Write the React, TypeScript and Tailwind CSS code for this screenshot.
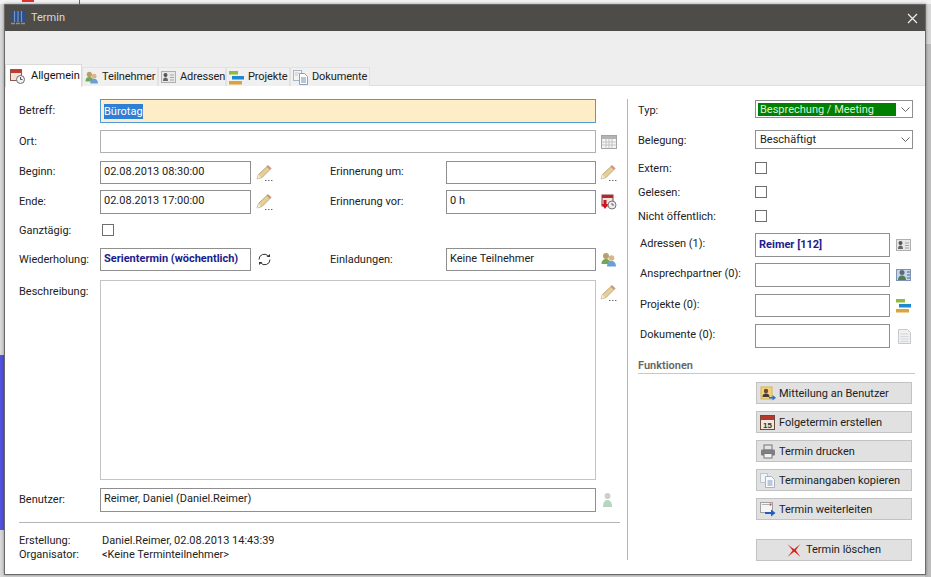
import type { ReactNode } from "react";

function Pencil() {
  return (
    <svg width="17" height="18" viewBox="0 0 17 18" className="shrink-0">
      <path d="M1 15 L2.500 10.500 L12 1.500 L15 4.500 L6 13.500 Z" fill="#e6cf96" stroke="#a89a78" strokeWidth="0.8" />
      <path d="M12 1.500 L15 4.500 L13.800 5.700 L10.700 2.800 Z" fill="#d98a7a" />
      <path d="M1 15 L2.500 10.500 L5 13.800 Z" fill="#f3ead3" />
      <path d="M9 16.500h1.400M12 16.500h1.400M15 16.500h1.400" stroke="#666" strokeWidth="1.100" />
    </svg>
  );
}

function CalendarGrid() {
  return (
    <svg width="16" height="14" viewBox="0 0 16 14" className="shrink-0">
      <rect x="0.500" y="0.500" width="15" height="13" fill="#f4f4f4" stroke="#a4a4a4" />
      <rect x="1" y="1" width="14" height="3" fill="#b4b4b4" />
      <path d="M1 7h14M1 10h14M5 4v9M8 4v9M11 4v9" stroke="#c4c4c4" strokeWidth="1" />
    </svg>
  );
}

function Reminder() {
  return (
    <svg width="16" height="16" viewBox="0 0 16 16" className="shrink-0">
      <rect x="1" y="1" width="11" height="11" fill="#f1e4e4" stroke="#8e3a3a" />
      <rect x="1" y="1" width="11" height="3" fill="#b02a2a" />
      <path d="M2.500 6h3v4h2L4 15 0.500 10h2z" fill="#d4141c" />
      <circle cx="11" cy="11" r="4" fill="#eeeeee" stroke="#777" />
      <path d="M11 9v2h2" stroke="#666" fill="none" />
    </svg>
  );
}

function People({ size = 15 }: { size?: number }) {
  return (
    <svg width={size} height={size} viewBox="0 0 15 15" className="shrink-0">
      <circle cx="5" cy="4" r="3" fill="#b9a06a" />
      <path d="M0.500 12c0-3.500 2-5 4.500-5s4.500 1.500 4.500 5z" fill="#6fa85a" />
      <circle cx="10.500" cy="6" r="2.800" fill="#d8b68a" />
      <path d="M6 14.500c0-3.500 2-5.500 4.500-5.500s4.500 2 4.500 5.500z" fill="#6d9fd6" />
    </svg>
  );
}

function AddressCard() {
  return (
    <svg width="15" height="12" viewBox="0 0 15 12" className="shrink-0">
      <rect x="0.500" y="0.500" width="14" height="11" fill="#e8e8e8" stroke="#b0b0b0" />
      <circle cx="4.500" cy="4" r="2" fill="#555" />
      <path d="M2 10c0-2.500 1-3.500 2.500-3.500S7 7.500 7 10z" fill="#666" />
      <path d="M9 4h4M9 6.500h4M9 9h4" stroke="#a6a6a6" />
    </svg>
  );
}

function ContactCard() {
  return (
    <svg width="15" height="14" viewBox="0 0 15 14" className="shrink-0">
      <rect x="0.500" y="1.500" width="14" height="11" fill="#c9d6e8" stroke="#7f93b0" />
      <circle cx="6" cy="4.500" r="2.500" fill="#5c6b7a" />
      <path d="M2 12c0-3 1.500-4.500 4-4.500S10 9 10 12z" fill="#4f7f56" />
      <path d="M11 4h3M11 7h3M11 10h3" stroke="#3b6aa8" />
    </svg>
  );
}

function Bars({ size = 15 }: { size?: number }) {
  return (
    <svg width={size} height={size} viewBox="0 0 15 15" className="shrink-0">
      <rect x="0" y="1" width="9" height="3.500" fill="#8fbc3f" />
      <rect x="3" y="6" width="12" height="3.500" fill="#1e88d2" />
      <rect x="0" y="11" width="13" height="3.500" fill="#d9a43b" />
    </svg>
  );
}

function Doc() {
  return (
    <svg width="13" height="15" viewBox="0 0 13 15" className="shrink-0">
      <path d="M0.500 0.500h9l3 3v11h-12z" fill="#f0f0f0" stroke="#c8c8c8" />
      <path d="M2.500 5h8M2.500 7.500h8M2.500 10h8M2.500 12.500h8" stroke="#d2d8de" />
    </svg>
  );
}

function DocPair() {
  return (
    <svg width="15" height="15" viewBox="0 0 15 15" className="shrink-0">
      <rect x="0.500" y="0.500" width="8" height="10" fill="#f3f3f3" stroke="#a9b4c4" />
      <path d="M6.500 3.500h5l3 3v8h-8z" fill="#ffffff" stroke="#8ea0b8" />
      <path d="M8 8h5M8 10h5M8 12h5" stroke="#6a8fc0" />
      <path d="M2 3h4M2 5h3" stroke="#c0c8d4" />
    </svg>
  );
}

function Sync() {
  return (
    <svg width="15" height="13" viewBox="0 0 15 13" fill="none" className="shrink-0">
      <path d="M2 6.500a5.200 5.200 0 0 1 9.500-3" stroke="#333" strokeWidth="1" />
      <path d="M13 6.500a5.200 5.200 0 0 1-9.500 3" stroke="#333" strokeWidth="1" />
      <path d="M9.500 4h3.500V1z" fill="#333" />
      <path d="M5.500 9H2v3z" fill="#333" />
    </svg>
  );
}

function UserGhost() {
  return (
    <svg width="11" height="16" viewBox="0 0 11 16" className="shrink-0">
      <circle cx="5.500" cy="4" r="3" fill="#cfcfc8" />
      <path d="M1 15c0-5 2-7 4.500-7S10 10 10 15z" fill="#b6d6c0" />
    </svg>
  );
}

function MessageIcon() {
  return (
    <svg width="16" height="15" viewBox="0 0 16 15" className="shrink-0">
      <rect x="1" y="1" width="11" height="12" fill="#f3d27a" stroke="#d6b355" />
      <circle cx="6" cy="5" r="2.200" fill="#6b4a2e" />
      <path d="M2.500 11c0-2.500 1.500-3.500 3.500-3.500s3.500 1 3.500 3.500z" fill="#3d3d3d" />
      <path d="M9 11h3.500V9l3.500 2.800-3.500 2.800v-2H9z" fill="#2b6fd0" />
    </svg>
  );
}

function FollowIcon() {
  return (
    <svg width="15" height="15" viewBox="0 0 15 15" className="shrink-0">
      <rect x="0.500" y="0.500" width="14" height="14" fill="#f1e8df" stroke="#6b4a3a" />
      <rect x="1" y="1" width="13" height="4" fill="#b5372e" />
      <text x="7.500" y="12.500" textAnchor="middle" fontSize="8" fontWeight="700" fill="#333" fontFamily="Liberation Sans, sans-serif">15</text>
    </svg>
  );
}

function PrintIcon() {
  return (
    <svg width="16" height="15" viewBox="0 0 16 15" className="shrink-0">
      <rect x="4" y="1" width="8" height="5" fill="#e4e4e4" stroke="#777" />
      <rect x="1" y="5.500" width="14" height="6" rx="1" fill="#7c7f84" />
      <rect x="4" y="9.500" width="8" height="4.500" fill="#f2f2f2" stroke="#777" />
    </svg>
  );
}

function CopyIcon() {
  return (
    <svg width="15" height="15" viewBox="0 0 15 15" className="shrink-0">
      <rect x="0.500" y="0.500" width="7" height="9" fill="#f0f3f7" stroke="#bcc6d2" />
      <path d="M5.500 3.500h6l3 3v8h-9z" fill="#fbfbfb" stroke="#a7b3c4" />
      <path d="M7.500 8h5M7.500 10h5M7.500 12h5" stroke="#7d97bd" />
    </svg>
  );
}

function ForwardIcon() {
  return (
    <svg width="16" height="15" viewBox="0 0 16 15" className="shrink-0">
      <rect x="0.500" y="0.500" width="12" height="10" fill="#f5f5f5" stroke="#a0a0a0" />
      <path d="M2 2.500h7" stroke="#b0b0b0" />
      <rect x="9.500" y="1.500" width="2" height="2" fill="#d04040" />
      <path d="M5 10h6V7.500l4.500 3.500-4.500 3.500V12H5z" fill="#1f5fc4" />
    </svg>
  );
}

function RedX() {
  return (
    <svg width="14" height="13" viewBox="0 0 14 13" className="shrink-0">
      <path d="M0.500 0C4 3 6 4.500 7.200 5.200 9 3.800 11 2 13.500 0 11.500 2.500 9.800 4.600 8.800 6.300 10.200 8.300 11.800 10.500 13.500 13 11 10.800 9 9.200 7 7.800 5 9.500 3 11 0.500 13 2.500 10.500 4.200 8.300 5.600 6.500 4.200 4.500 2.500 2.500 0.500 0Z" fill="#d8231c" />
    </svg>
  );
}

function WindowIcon() {
  return (
    <svg width="14" height="14" viewBox="0 0 14 14" className="shrink-0">
      <rect x="0" y="0" width="14" height="11" fill="#2a4f8f" />
      <path d="M3.500 0v11M7 0v11M10.500 0v11" stroke="#7a93b8" strokeWidth="1.200" />
      <path d="M0 12.500h4M5 12.500h4M10 12.500h4" stroke="#8a8f98" strokeWidth="1.500" />
    </svg>
  );
}

function TabCalendar() {
  return (
    <svg width="15" height="15" viewBox="0 0 15 15" className="shrink-0">
      <rect x="0.500" y="0.500" width="11" height="11" fill="#efe4d8" stroke="#8a5a4a" />
      <rect x="1" y="1" width="10" height="3" fill="#c23b32" />
      <circle cx="10.500" cy="10.500" r="4" fill="#f2f2f2" stroke="#6d6d6d" />
      <path d="M10.500 8v2.500h2" stroke="#555" fill="none" />
    </svg>
  );
}

function Field({ children, className }: { children?: ReactNode; className: string }) {
  return <div className={`flex h-full items-start overflow-hidden whitespace-nowrap pl-[3px] pt-[2px] leading-[15px] ${className}`}>{children}</div>;
}

function Check() {
  return <div className="h-[12px] w-[12px] shrink-0 border border-[#6f6f6f] bg-white" />;
}

function Tab({ icon, label, width, active }: { icon: ReactNode; label: string; width: string; active?: boolean }) {
  if (active) {
    return (
      <div className={`z-10 -mb-px flex h-[23px] items-center gap-[6px] border border-b-0 border-[#d9d9d9] bg-white pl-[4px] ${width}`}>
        {icon}
        <span className="text-[#111]">{label}</span>
      </div>
    );
  }
  return (
    <div className={`mt-[3px] flex h-[19px] items-center gap-[4px] overflow-hidden whitespace-nowrap border border-b-0 border-[#e2e2e2] bg-[#f0f0f0] pl-[2px] ${width}`}>
      {icon}
      <span className="tracking-[-0.1px] text-[#222]">{label}</span>
    </div>
  );
}

function ActionButton({ icon, label, className }: { icon: ReactNode; label: string; className: string }) {
  return (
    <div className={`flex h-[22px] w-[156px] items-center gap-[3px] border border-[#c2c2c2] bg-[#e1e1e1] pl-[3px] text-[#222] ${className}`}>
      <div className="w-[16px] shrink-0">{icon}</div>
      <span className="pt-[2px]">{label}</span>
    </div>
  );
}

function RightField({ label, mt, h, icon, children }: { label: string; mt: string; h: string; icon: ReactNode; children?: ReactNode }) {
  return (
    <div className={`flex items-center ${mt} ${h}`}>
      <span className="w-[117px] shrink-0 pb-[1px] pl-[2px]">{label}</span>
      <Field className="w-[135px] border border-[#8f8f8f]">{children}</Field>
      <div className="flex w-[21px] justify-end">{icon}</div>
    </div>
  );
}

export default function App() {
  return (
    <div
      className="relative h-[577px] w-[931px] overflow-hidden bg-[#d8d8d8] text-[11px] text-[#222]"
      style={{ fontFamily: 'Roboto, "Open Sans", sans-serif' }}
    >
      {/* desktop behind the dialog */}
      <div className="absolute left-0 top-0 h-[4px] w-full bg-[#f2f2f2]" />
      <div className="absolute left-[22px] top-0 h-[2px] w-[12px] bg-[#e03030]" />
      <div className="absolute left-[79px] top-0 h-[4px] w-px bg-[#666]" />
      <div className="absolute left-0 top-[355px] h-[175px] w-[4px] bg-[#5252e0]" />
      <div className="absolute right-0 top-[44px] h-[533px] w-[6px] bg-[#bdbdbd]" />

      <div className="absolute left-[4px] top-[4px] flex h-[571px] w-[922px] flex-col border border-[#6a6a6a] bg-white shadow-[0_0_3px_rgba(0,0,0,0.4)]">
        {/* title bar */}
        <div className="flex h-[26px] shrink-0 items-center bg-[#4d4c49] pl-[6px] pr-[7px] text-[#d9d9d9]">
          <WindowIcon />
          <span className="ml-[6px]">Termin</span>
          <svg width="11" height="11" viewBox="0 0 11 11" className="ml-auto">
            <path d="M1 1l9 9M10 1l-9 9" stroke="#eeeeee" strokeWidth="1.200" />
          </svg>
        </div>

        {/* ribbon area + tabs */}
        <div className="h-[33px] shrink-0 bg-[#eeeeee]" />
        <div className="flex h-[22px] shrink-0 items-start border-b border-[#e0e0e0] bg-[#eeeeee]">
          <Tab active icon={<TabCalendar />} label="Allgemein" width="w-[77px]" />
          <Tab icon={<People size={13} />} label="Teilnehmer" width="w-[76px]" />
          <Tab icon={<AddressCard />} label="Adressen" width="w-[68px]" />
          <Tab icon={<Bars />} label="Projekte" width="w-[64px]" />
          <Tab icon={<DocPair />} label="Dokumente" width="w-[80px]" />
        </div>

        <div className="flex min-h-0 flex-1">
          {/* left column */}
          <div className="w-[622px] shrink-0 pl-[14px] pt-[13px]">
            <div className="flex h-[24px] items-center">
              <span className="w-[81px] shrink-0">Betreff:</span>
              <div className="flex h-full w-[496px] items-center border border-[#4f9bd9] bg-[#fdeec8] pl-[3px]">
                <span className="bg-[#2f7fd6] leading-[15px] text-white">Bürotag</span>
              </div>
            </div>

            <div className="mt-[7px] flex h-[23px] items-center">
              <span className="w-[81px] shrink-0 pt-[2px]">Ort:</span>
              <Field className="w-[496px] border border-[#b0b0b0]" />
              <div className="ml-[5px]"><CalendarGrid /></div>
            </div>

            <div className="mt-[8px] flex h-[23px] items-center">
              <span className="w-[81px] shrink-0">Beginn:</span>
              <Field className="w-[151px] border border-[#8f8f8f]">02.08.2013 08:30:00</Field>
              <div className="ml-[5px] w-[74px]"><Pencil /></div>
              <span className="w-[116px] shrink-0">Erinnerung um:</span>
              <Field className="w-[150px] border border-[#8f8f8f]" />
              <div className="ml-[4px]"><Pencil /></div>
            </div>

            <div className="mt-[6px] flex h-[24px] items-center">
              <span className="w-[81px] shrink-0">Ende:</span>
              <Field className="w-[151px] border border-[#8f8f8f]">02.08.2013 17:00:00</Field>
              <div className="ml-[5px] w-[74px]"><Pencil /></div>
              <span className="w-[116px] shrink-0">Erinnerung vor:</span>
              <Field className="w-[150px] border border-[#8f8f8f]">0 h</Field>
              <div className="ml-[5px]"><Reminder /></div>
            </div>

            <div className="mt-[8px] flex h-[15px] items-center">
              <span className="w-[83px] shrink-0 pt-[3px]">Ganztägig:</span>
              <Check />
            </div>

            <div className="mt-[11px] flex h-[23px] items-center">
              <span className="w-[81px] shrink-0 pt-[2px]">Wiederholung:</span>
              <Field className="w-[151px] border border-[#8f8f8f] font-bold text-[#1c1c8c]">Serientermin (wöchentlich)</Field>
              <div className="ml-[6px] w-[73px]"><Sync /></div>
              <span className="w-[116px] shrink-0 pt-[2px]">Einladungen:</span>
              <Field className="w-[150px] border border-[#8f8f8f]">Keine Teilnehmer</Field>
              <div className="ml-[5px]"><People /></div>
            </div>

            <div className="mt-[9px] flex h-[200px] items-start">
              <span className="w-[81px] shrink-0 pt-[4px]">Beschreibung:</span>
              <Field className="w-[496px] border border-[#c4c4c4]" />
              <div className="ml-[4px] pt-[4px]"><Pencil /></div>
            </div>

            <div className="mt-[8px] flex h-[24px] items-center">
              <span className="w-[81px] shrink-0">Benutzer:</span>
              <Field className="w-[496px] border border-[#8f8f8f]">Reimer, Daniel (Daniel.Reimer)</Field>
              <div className="ml-[6px]"><UserGhost /></div>
            </div>

            <div className="mt-[10px] h-px w-[601px] bg-[#b4b4b4]" />

            <div className="mt-[11px] flex leading-[14px]">
              <span className="w-[83px] shrink-0">Erstellung:</span>
              <span>Daniel.Reimer, 02.08.2013 14:43:39</span>
            </div>
            <div className="flex leading-[14px]">
              <span className="w-[83px] shrink-0">Organisator:</span>
              <span>&lt;Keine Terminteilnehmer&gt;</span>
            </div>
          </div>

          {/* right column */}
          <div className="mt-[13px] h-[461px] w-px shrink-0 bg-[#b4b4b4]" />
          <div className="w-[290px] shrink-0 pl-[10px]">
            <div className="mt-[14px] flex h-[18px] items-center">
              <span className="w-[117px] shrink-0 pt-[4px]">Typ:</span>
              <div className="flex h-full w-[158px] items-center border border-[#8f8f8f] pl-[2px]">
                <span className="h-[13px] w-[138px] bg-[#008000] pl-[2px] leading-[13px] text-[#d8f0d8]">Besprechung / Meeting</span>
                <svg width="9" height="5" viewBox="0 0 9 5" className="ml-[5px]"><path d="M0.500 0.500l4 4 4-4" stroke="#666" fill="none" /></svg>
              </div>
            </div>
            <div className="mt-[12px] flex h-[19px] items-center">
              <span className="w-[117px] shrink-0 pt-[3px]">Belegung:</span>
              <div className="flex h-full w-[158px] items-center border border-[#8f8f8f] pl-[4px]">
                <span className="w-[138px] pt-[1px]">Beschäftigt</span>
                <svg width="9" height="5" viewBox="0 0 9 5" className="ml-[3px]"><path d="M0.500 0.500l4 4 4-4" stroke="#666" fill="none" /></svg>
              </div>
            </div>
            <div className="mt-[12px] flex h-[14px] items-center">
              <span className="w-[117px] shrink-0 pt-[2px]">Extern:</span>
              <Check />
            </div>
            <div className="mt-[10px] flex h-[14px] items-center">
              <span className="w-[117px] shrink-0 pt-[2px]">Gelesen:</span>
              <Check />
            </div>
            <div className="mt-[10px] flex h-[14px] items-center">
              <span className="w-[117px] shrink-0 pt-[2px]">Nicht öffentlich:</span>
              <Check />
            </div>

            <RightField label="Adressen (1):" mt="mt-[10px]" h="h-[24px]" icon={<AddressCard />}>
              <span className="mt-px font-bold text-[#1c1c8c]">Reimer [112]</span>
            </RightField>
            <RightField label="Ansprechpartner (0):" mt="mt-[6px]" h="h-[24px]" icon={<ContactCard />} />
            <RightField label="Projekte (0):" mt="mt-[7px]" h="h-[23px]" icon={<Bars />} />
            <RightField label="Dokumente (0):" mt="mt-[7px]" h="h-[24px]" icon={<Doc />} />

            <div className="mt-[10px] font-semibold leading-[15px] text-[#666]">Funktionen</div>
            <div className="h-px w-[277px] bg-[#c8c8c8]" />

            <div className="ml-[118px] mt-[8px] flex flex-col">
              <ActionButton icon={<MessageIcon />} label="Mitteilung an Benutzer" className="" />
              <ActionButton icon={<FollowIcon />} label="Folgetermin erstellen" className="mt-[7px]" />
              <ActionButton icon={<PrintIcon />} label="Termin drucken" className="mt-[7px]" />
              <ActionButton icon={<CopyIcon />} label="Terminangaben kopieren" className="mt-[7px]" />
              <ActionButton icon={<ForwardIcon />} label="Termin weiterleiten" className="mt-[7px]" />
              <div className="mt-[19px] flex h-[22px] w-[156px] items-center justify-center gap-[5px] border border-[#c2c2c2] bg-[#e1e1e1]">
                <RedX />
                <span>Termin löschen</span>
              </div>
            </div>
          </div>
        </div>
      </div>
    </div>
  );
}
